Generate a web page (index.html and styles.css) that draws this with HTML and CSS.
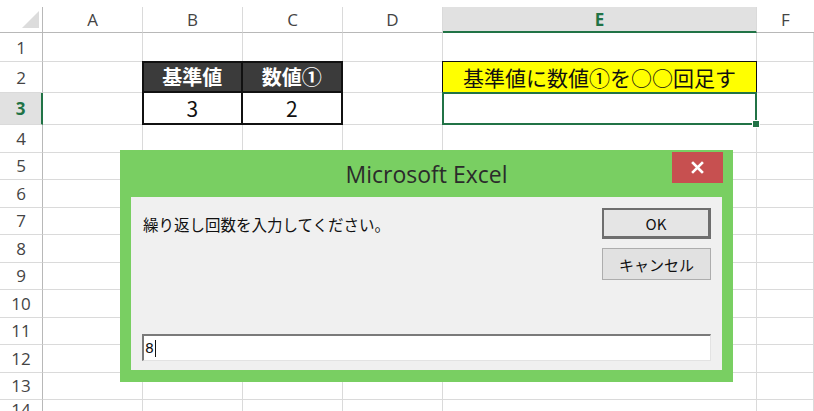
FILE: index.html
```html
<!DOCTYPE html>
<html lang="ja">
<head>
  <meta charset="UTF-8">
  <title>Microsoft Excel</title>
  <link rel="stylesheet" href="styles.css">
</head>
<body>

  <div class="sheet">
    <div class="gap"></div>

    <div class="corner"></div><div class="ch">A</div><div class="ch">B</div><div class="ch">C</div><div class="ch">D</div><div class="ch ch-sel">E</div><div class="ch last">F</div>

    <div class="rh">1</div><div class="c"></div><div class="c"></div><div class="c"></div><div class="c"></div><div class="c"></div><div class="c"></div>

    <div class="rh">2</div><div class="c"></div><div class="c"></div><div class="c note">基準値に数値①を○○回足す</div><div class="c"></div>
    <div class="rh rh-sel">3</div><div class="c"></div><div class="c"></div><div class="c active"></div><div class="c"></div>

    <div class="tbl">
      <div class="th">基準値</div>
      <div class="th">数値①</div>
      <div class="td">3</div>
      <div class="td">2</div>
    </div>

    <div class="rh">4</div><div class="c"></div><div class="c"></div><div class="c"></div><div class="c"></div><div class="c"></div><div class="c"></div>
    <div class="rh">5</div><div class="c"></div><div class="c"></div><div class="c"></div><div class="c"></div><div class="c"></div><div class="c"></div>
    <div class="rh">6</div><div class="c"></div><div class="c"></div><div class="c"></div><div class="c"></div><div class="c"></div><div class="c"></div>
    <div class="rh">7</div><div class="c"></div><div class="c"></div><div class="c"></div><div class="c"></div><div class="c"></div><div class="c"></div>
    <div class="rh">8</div><div class="c"></div><div class="c"></div><div class="c"></div><div class="c"></div><div class="c"></div><div class="c"></div>
    <div class="rh">9</div><div class="c"></div><div class="c"></div><div class="c"></div><div class="c"></div><div class="c"></div><div class="c"></div>
    <div class="rh">10</div><div class="c"></div><div class="c"></div><div class="c"></div><div class="c"></div><div class="c"></div><div class="c"></div>
    <div class="rh">11</div><div class="c"></div><div class="c"></div><div class="c"></div><div class="c"></div><div class="c"></div><div class="c"></div>
    <div class="rh">12</div><div class="c"></div><div class="c"></div><div class="c"></div><div class="c"></div><div class="c"></div><div class="c"></div>
    <div class="rh">13</div><div class="c"></div><div class="c"></div><div class="c"></div><div class="c"></div><div class="c"></div><div class="c"></div>
    <div class="rh">14</div><div class="c"></div><div class="c"></div><div class="c"></div><div class="c"></div><div class="c"></div><div class="c"></div>
  </div>

  <div class="dialog">
    <div class="title">Microsoft Excel</div>
    <div class="close">
      <svg width="13" height="13" viewBox="0 0 13 13">
        <path d="M2 2 L11 11 M11 2 L2 11" stroke="#fff" stroke-width="2.6" stroke-linecap="square"/>
      </svg>
    </div>
    <div class="body">
      <div class="top">
        <div class="msg">繰り返し回数を入力してください。</div>
        <div class="btns">
          <div class="btn btn-ok">OK</div>
          <div class="btn">キャンセル</div>
        </div>
      </div>
      <div class="input">8<span class="caret"></span></div>
    </div>
  </div>

</body>
</html>
```

FILE: styles.css
```css
body {
  margin: 0;
  width: 814px;
  height: 411px;
  overflow: hidden;
  background: #fff;
  font-family: "Noto Sans CJK JP", sans-serif;
  color: #222;
}
.sheet {
  display: grid;
  grid-template-columns: 43px 100px 100px 100px 100px 314px 57px;
  grid-template-rows: 7px 26px 29px 31px 32px repeat(10, 27.5px) 20px;
}
.gap {
  grid-column: 1 / -1;
}
.sheet > div {
  box-sizing: border-box;
}
.c {
  border-right: 1px solid #dadada;
  border-bottom: 1px solid #dadada;
}
.ch {
  border-right: 1px solid #dadada;
  border-bottom: 1px solid #b8b8b8;
  display: flex;
  align-items: center;
  justify-content: center;
  font-family: "Open Sans", sans-serif;
  font-size: 17px;
  color: #444;
}
.ch.last {
  border-right: none;
}
.ch-sel {
  background: #e1e1e1;
  border-bottom: 2px solid #217346;
  color: #217346;
  font-weight: bold;
}
.corner {
  border-right: 1px solid #b8b8b8;
  border-bottom: 1px solid #b8b8b8;
  position: relative;
}
.corner::after {
  content: "";
  position: absolute;
  right: 3px;
  bottom: 4px;
  border-left: 17px solid transparent;
  border-bottom: 17px solid #dcdcdc;
}
.rh {
  border-right: 1px solid #b8b8b8;
  border-bottom: 1px solid #dadada;
  display: flex;
  align-items: center;
  justify-content: center;
  font-family: "Open Sans", sans-serif;
  font-size: 17px;
  color: #444;
}
.rh-sel {
  background: #e1e1e1;
  border-right: 2px solid #217346;
  color: #217346;
  font-weight: bold;
}
.note {
  margin: -1px 0 0 -1px;
  border: 1px solid #111;
  background: #ffff00;
  display: flex;
  align-items: center;
  justify-content: center;
  font-size: 21px;
  line-height: 1;
  color: #111;
}
.active {
  margin: -1px 0 0 -1px;
  border: 2px solid #217346;
  position: relative;
}
.active::after {
  content: "";
  position: absolute;
  right: -5px;
  bottom: -5px;
  width: 6px;
  height: 6px;
  background: #217346;
  border: 1px solid #fff;
}
.tbl {
  grid-column: 3 / 5;
  grid-row: 4 / 6;
  margin: -1px 0 0 -1px;
  border: 2px solid #111;
  display: grid;
  grid-template-columns: 1fr 1fr;
  grid-template-rows: 30px 1fr;
}
.th, .td {
  display: flex;
  align-items: center;
  justify-content: center;
  font-size: 20px;
  line-height: 1;
}
.th {
  background: #3b3b3b;
  color: #fff;
  font-weight: bold;
  border-bottom: 2px solid #111;
}
.td {
  background: #fff;
  color: #111;
  font-size: 21px;
}
.th:first-child, .td:nth-child(3) {
  border-right: 2px solid #111;
}

.dialog {
  position: absolute;
  left: 120px;
  top: 150px;
  width: 613px;
  height: 232px;
  box-sizing: border-box;
  background: #79cf62;
  padding: 0 11px 12px;
  display: flex;
  flex-direction: column;
}
.title {
  height: 47px;
  display: flex;
  align-items: center;
  justify-content: center;
  font-family: "Open Sans", sans-serif;
  font-size: 23px;
  color: #2b2b2b;
}
.close {
  position: absolute;
  top: 2px;
  right: 10px;
  width: 51px;
  height: 31px;
  background: #c75050;
  display: flex;
  align-items: center;
  justify-content: center;
}
.body {
  flex: 1;
  background: #f0f0f0;
  padding: 11px 11px 9px;
  display: flex;
  flex-direction: column;
}
.top {
  display: flex;
}
.msg {
  flex: 1;
  padding: 6px 0 0 1px;
  font-size: 15.5px;
  line-height: 20px;
  color: #111;
}
.btns {
  width: 109px;
  display: flex;
  flex-direction: column;
  gap: 9px;
}
.btn {
  height: 32px;
  box-sizing: border-box;
  border: 1px solid #adadad;
  background: #e1e1e1;
  display: flex;
  align-items: center;
  justify-content: center;
  font-size: 15px;
  color: #111;
}
.btn-ok {
  height: 31px;
  border: 2px solid #6e6e6e;
  border-right-width: 3px;
  border-bottom-width: 3px;
  background: #e5e5e5;
}
.input {
  margin-top: auto;
  height: 27px;
  box-sizing: border-box;
  background: #fff;
  border: 1px solid #e3e3e3;
  border-top: 2px solid #7a7a7a;
  border-left: 2px solid #7a7a7a;
  display: flex;
  align-items: center;
  padding-left: 1px;
  font-family: "DejaVu Sans", sans-serif;
  font-size: 14px;
  color: #111;
}
.caret {
  display: inline-block;
  width: 1px;
  height: 17px;
  background: #111;
  margin-left: 1px;
}
```
